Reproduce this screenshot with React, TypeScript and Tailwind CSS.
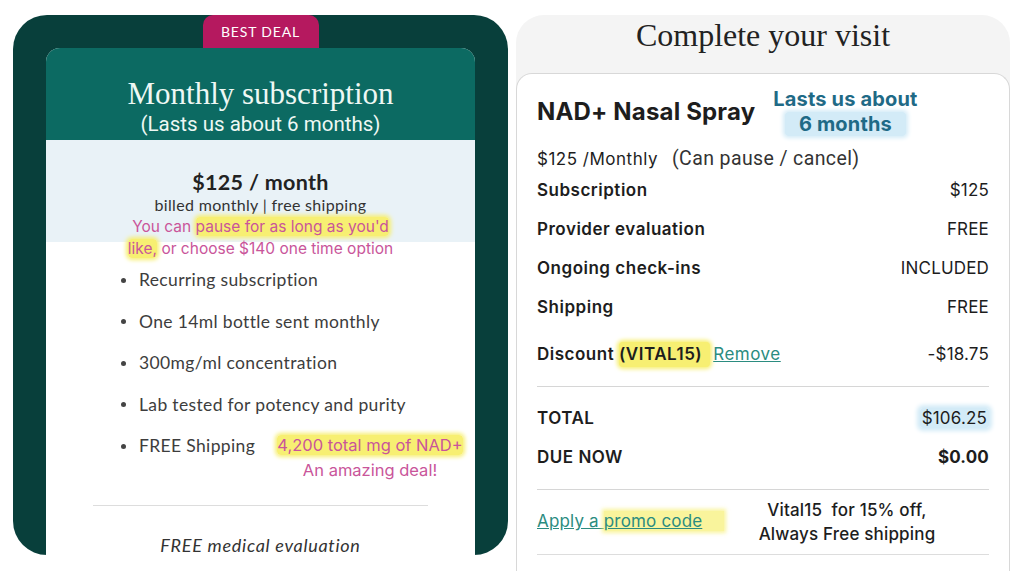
import React from 'react';

const serif = { fontFamily: '"Liberation Serif", "DejaVu Serif", serif' };

const bullets = [
  'Recurring subscription',
  'One 14ml bottle sent monthly',
  '300mg/ml concentration',
  'Lab tested for potency and purity',
  'FREE Shipping',
];

const hl = 'bg-[#f7ef72] rounded-[4px] shadow-[0_0_4px_2px_#f7ef72]';

const SubscriptionCard = () => (
  <div className="w-[495px] h-[540px] bg-[#083f3b] rounded-[34px] flex flex-col px-[33px]">
    <div className="self-center w-[116px] h-[33px] shrink-0 bg-[#b5195f] rounded-t-[10px] flex items-center justify-center text-white text-[14px] tracking-[0.06em] font-['Lato',sans-serif]">
      BEST DEAL
    </div>
    <div className="relative flex-1 bg-white rounded-t-[14px] flex flex-col">
      {/* header */}
      <div className="h-[92px] bg-[#0c6a62] rounded-t-[14px] flex flex-col items-center pt-[30px] text-[#eef8f4]">
        <div className="text-[31px] leading-[32px]" style={serif}>Monthly subscription</div>
        <div className="text-[20.5px] leading-[28px] font-['Roboto',sans-serif]">(Lasts us about 6 months)</div>
      </div>

      {/* price */}
      <div className="h-[102px] bg-[#e9f2f7] flex flex-col items-center pt-[29px] font-['Lato',sans-serif] text-[#222] tracking-[0.02em]">
        <div className="text-[21.5px] leading-[26px] font-bold">$125 / month</div>
        <div className="text-[16px] leading-[20px] text-[#333]">billed monthly | free shipping</div>
      </div>

      <div className="absolute left-0 right-0 top-[168px] text-center text-[15.5px] leading-[22px] text-[#c9559a] font-['Inter',sans-serif]">
        You can <span className={hl}>pause for as long as you'd</span>
        <br />
        <span className={hl}>like,</span> or choose $140 one time option
      </div>

      <ul className="flex flex-col gap-[17.5px] pt-[26px] pl-[75px] font-['Lato',sans-serif] text-[17.5px] leading-[24px] tracking-[0.02em] text-[#3d3d3d]">
        {bullets.map((b) => (
          <li key={b} className="flex items-center">
            <span className="w-[5px] h-[5px] rounded-full bg-[#444] mr-[13px]" />
            {b}
          </li>
        ))}
      </ul>

      <div className="absolute left-[229px] top-[385px] w-[190px] text-center text-[16.5px] leading-[25px] text-[#c9559a] font-['Inter',sans-serif] whitespace-nowrap">
        <span className={hl}>4,200 total mg of NAD+</span>
        <br />
        An amazing deal!
      </div>

      <div className="mx-[47px] mt-[47px] border-t border-[#dddddd]" />
      <div className="mt-[29px] text-center italic text-[18px] leading-[20px] tracking-[0.04em] text-[#333] font-['Lato',sans-serif]">
        FREE medical evaluation
      </div>
    </div>
  </div>
);

const Row = ({ label, value, bold }: { label: React.ReactNode; value: React.ReactNode; bold?: boolean }) => (
  <div className="h-[39px] flex items-center justify-between">
    <div className="font-semibold tracking-[0.03em]">{label}</div>
    <div className={bold ? 'font-bold' : 'font-normal'}>{value}</div>
  </div>
);

const Summary = () => (
  <div className="w-[494px] h-[556px] bg-[#f4f4f4] rounded-t-[28px] flex flex-col">
    <div className="h-[58px] pt-[2px] text-center text-[32px] leading-[36px] text-[#222]" style={serif}>
      Complete your visit
    </div>
    <div className="flex-1 bg-white border border-[#d8d8d8] border-b-0 rounded-t-[16px] px-[20px] pt-[17px] font-['Inter',sans-serif] text-[17px] text-[#1d1d1d] tracking-[0.01em]">
      <div className="h-[42px] flex items-center">
        <div className="text-[24px] font-bold">NAD+ Nasal Spray</div>
        <div className="ml-[18px] text-center text-[20px] leading-[25px] font-bold text-[#1f6a86]">
          Lasts us about
          <br />
          <span className="bg-[#d3ebf7] px-[14px] rounded-[3px] shadow-[0_0_4px_2px_#d3ebf7]">6 months</span>
        </div>
      </div>
      <div className="h-[38px] pt-[13px] leading-[24px] flex items-center">
        <span className="tracking-[0.03em]">$125 /Monthly</span>
        <span className="ml-[14px] text-[19.5px] tracking-[0.02em] font-['Roboto',sans-serif] text-[#333]">(Can pause / cancel)</span>
      </div>
      <Row label="Subscription" value="$125" />
      <Row label="Provider evaluation" value="FREE" />
      <Row label="Ongoing check-ins" value="INCLUDED" />
      <Row label="Shipping" value="FREE" />
      <div className="h-[55px] flex items-center justify-between">
        <div className="flex items-center tracking-[0.03em]">
          <span className="font-semibold">Discount&nbsp;</span>
          <span className={'font-semibold pr-[8px] ' + hl}>(VITAL15)</span>
          <span className="ml-[3px] underline text-[#2b8c80]">Remove</span>
        </div>
        <div>-$18.75</div>
      </div>
      <div className="mt-[4px] border-t border-[#d6d6d6]" />
      <div className="mt-[12px]">
        <Row
          label="TOTAL"
          value={<span className="bg-[#d3ebf7] px-[2px] rounded-[3px] shadow-[0_0_4px_3px_#d3ebf7]">$106.25</span>}
        />
        <Row label="DUE NOW" value="$0.00" bold />
      </div>
      <div className="mt-[12px] border-t border-[#d6d6d6]" />
      <div className="h-[64px] flex items-center">
        <div className="w-[218px] underline text-[#2b8c80]">
          Apply a <span className="bg-[#f7ef72]/70 pr-[22px] shadow-[0_0_4px_2px_rgba(247,239,114,0.7)]">promo code</span>
        </div>
        <div className="w-[184px] text-center leading-[24px] font-medium">
          Vital15&nbsp; for 15% off,
          <br />
          Always Free shipping
        </div>
      </div>
      <div className="border-t border-[#dddddd]" />
    </div>
  </div>
);

export default function App() {
  return (
    <div className="w-[1024px] h-[571px] bg-white flex gap-[8px] pl-[13px] pt-[15px] overflow-hidden">
      <SubscriptionCard />
      <Summary />
    </div>
  );
}
